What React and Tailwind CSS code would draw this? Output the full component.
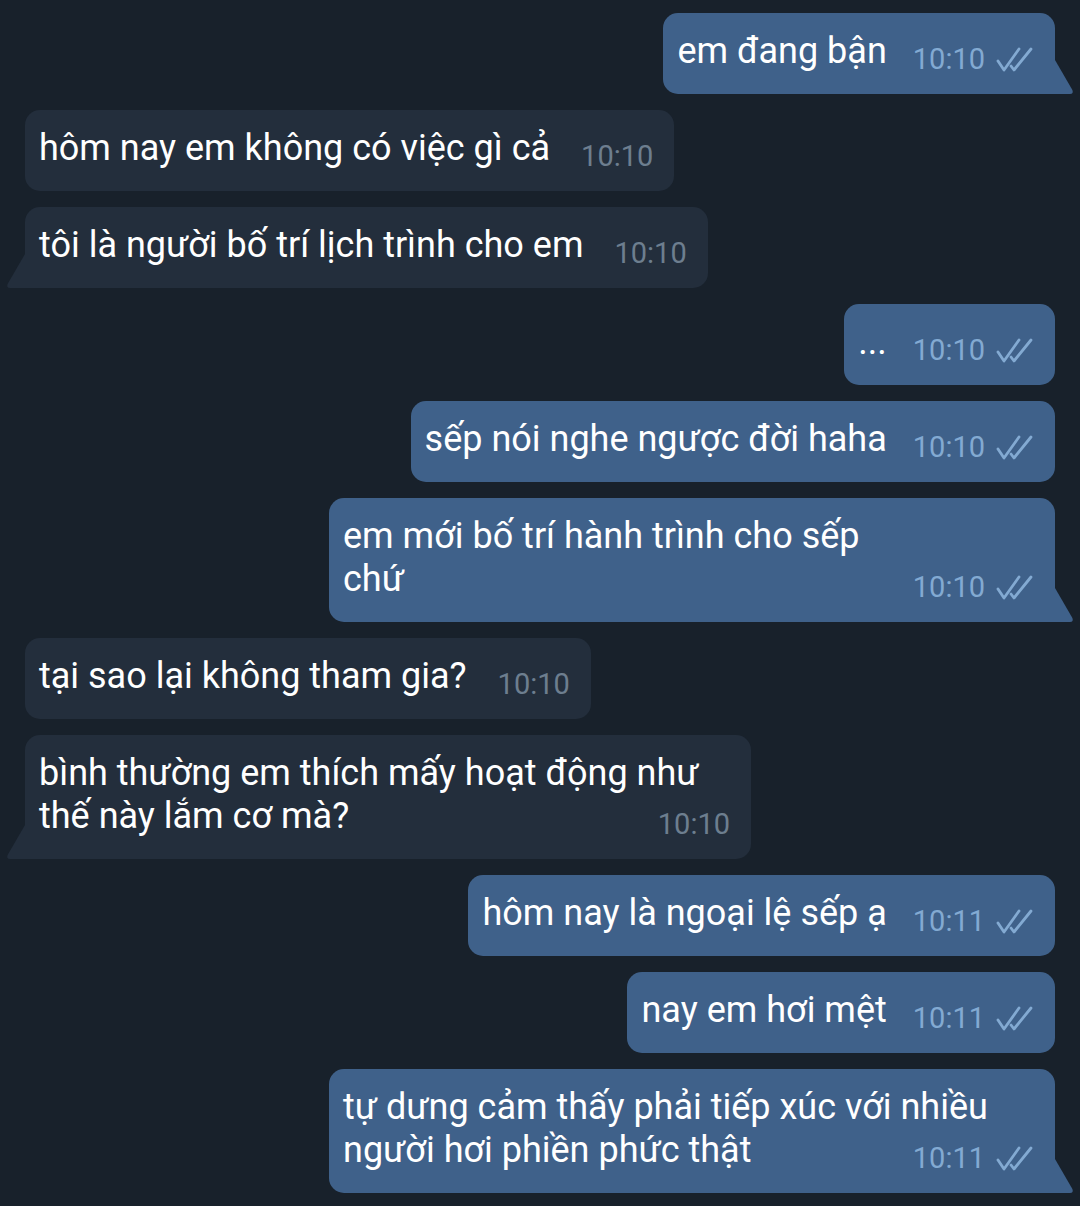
const messages = [
  { out: true, lines: ['em đang bận'], time: '10:10', tail: true },
  { out: false, lines: ['hôm nay em không có việc gì cả'], time: '10:10' },
  { out: false, lines: ['tôi là người bố trí lịch trình cho em'], time: '10:10', tail: true },
  { out: true, lines: ['...'], time: '10:10' },
  { out: true, lines: ['sếp nói nghe ngược đời haha'], time: '10:10' },
  { out: true, lines: ['em mới bố trí hành trình cho sếp', 'chứ'], time: '10:10', tail: true },
  { out: false, lines: ['tại sao lại không tham gia?'], time: '10:10' },
  { out: false, lines: ['bình thường em thích mấy hoạt động như', 'thế này lắm cơ mà?'], time: '10:10', tail: true },
  { out: true, lines: ['hôm nay là ngoại lệ sếp ạ'], time: '10:11' },
  { out: true, lines: ['nay em hơi mệt'], time: '10:11' },
  { out: true, lines: ['tự dưng cảm thấy phải tiếp xúc với nhiều', 'người hơi phiền phức thật'], time: '10:11', tail: true },
];

const DoubleCheck = () => (
  <svg width="38" height="25" viewBox="0 0 38 25" fill="none" stroke="#83aad2" strokeWidth="2.8" strokeLinecap="round" strokeLinejoin="round" className="ml-[10px] mb-[1px] shrink-0">
    <path d="M3 14 L9 23 L24 2" />
    <path d="M16 19 L19 23 L36 2" />
  </svg>
);

// straight diagonal tail with a softly rounded tip
const Tail = ({ out }) =>
  out ? (
    <svg width="20" height="34" viewBox="0 0 20 34" className="absolute bottom-0 right-[-19px]">
      <path d="M0 0 L1 0 L18.4 30 Q19.8 34 16 34 L0 34 Z" fill="#3f618a" />
    </svg>
  ) : (
    <svg width="20" height="34" viewBox="0 0 20 34" className="absolute bottom-0 left-[-19px]">
      <path d="M20 0 L19 0 L1.6 30 Q0.2 34 4 34 L20 34 Z" fill="#232e3c" />
    </svg>
  );

const Bubble = ({ m }) => {
  const multi = m.lines.length > 1;
  const last = m.lines[m.lines.length - 1];
  return (
    <div
      className={`relative flex flex-col pl-[14px] pt-[17px] pb-[21px] text-[36px] leading-[43px] text-white whitespace-nowrap ${
        m.out ? 'self-end bg-[#3f618a] pr-[22px]' : 'self-start bg-[#232e3c] pr-[21px]'
      } ${multi ? 'w-[726px]' : ''} rounded-[15px] ${
        m.tail ? (m.out ? 'rounded-br-none' : 'rounded-bl-none') : ''
      }`}
    >
      {m.lines.slice(0, -1).map((l, i) => (
        <div key={i}>{l}</div>
      ))}
      <div className="flex items-end justify-between">
        <span>{last}</span>
        <div className={`flex items-end shrink-0 ${m.out ? 'ml-[26px]' : 'ml-[31px]'}`}>
          <span className={`text-[29px] leading-[28px] ${m.out ? 'text-[#83aad2]' : 'text-[#6d7e8f]'}`}>{m.time}</span>
          {m.out && <DoubleCheck />}
        </div>
      </div>
      {m.tail && <Tail out={m.out} />}
    </div>
  );
};

export default function App() {
  return (
    <div
      className="w-[1080px] min-h-[1206px] bg-[#18212b] px-[25px] pt-[13px] pb-[14px] flex flex-col gap-[16px] overflow-hidden"
      style={{ fontFamily: 'Roboto, "Noto Sans", sans-serif' }}
    >
      {messages.map((m, i) => (
        <Bubble key={i} m={m} />
      ))}
    </div>
  );
}
